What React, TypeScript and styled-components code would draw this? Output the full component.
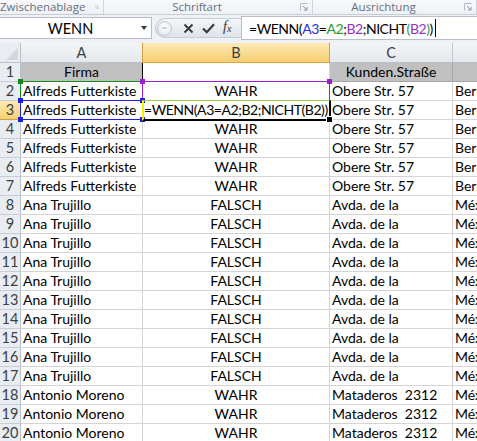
import React from "react";
import styled, { createGlobalStyle } from "styled-components";

const GlobalStyle = createGlobalStyle`
  html, body {
    margin: 0;
    padding: 0;
    background: #ffffff;
    overflow: hidden;
  }
`;

const Window = styled.div`
  width: 477px;
  height: 441px;
  overflow: hidden;
  display: flex;
  flex-direction: column;
  font-family: Lato, "Liberation Sans", sans-serif;
  color: #000;
`;

/* ---------- ribbon group labels ---------- */

const Ribbon = styled.div`
  height: 14px;
  flex-shrink: 0;
  display: flex;
  background: linear-gradient(#f8f9fb, #eef1f5);
  border-bottom: 1px solid #c5ccd6;
  font-family: "Open Sans", "Noto Sans", sans-serif;
  font-size: 11.5px;
  line-height: 14px;
  color: #65707e;
`;

const RibbonGroup = styled.div<{ $width: number; $end?: boolean }>`
  width: ${(p) => p.$width}px;
  flex-shrink: 0;
  display: flex;
  align-items: center;
  justify-content: ${(p) => (p.$end ? "flex-end" : "center")};
  gap: 10px;
  padding-right: 4px;
  box-sizing: border-box;
  border-right: 1px solid #cdd4de;
  white-space: nowrap;
  overflow: hidden;
`;

const GroupLabel = styled.span<{ $grow?: boolean }>`
  flex: ${(p) => (p.$grow ? 1 : "none")};
  text-align: center;
`;

const Launcher = () => (
  <svg width="8" height="8" viewBox="0 0 8 8">
    <path d="M0.5 7.5V0.5H7.5" fill="none" stroke="#b6bcc5" />
    <path d="M3 3L7 7M7 4V7H4" fill="none" stroke="#8f96a0" />
  </svg>
);

/* ---------- formula bar ---------- */

const FormulaBar = styled.div`
  height: 28px;
  flex-shrink: 0;
  display: flex;
  align-items: flex-start;
  padding-top: 2px;
  box-sizing: border-box;
  background: #eef1f5;
`;

const NameBox = styled.div`
  width: 152px;
  height: 22px;
  box-sizing: border-box;
  background: #fff;
  border: 1px solid #b7bec8;
  border-left: none;
  display: flex;
  align-items: center;
  font-size: 14.5px;
`;

const NameText = styled.span`
  flex: 1;
  text-align: center;
`;

const DropArrow = styled.span`
  width: 0;
  height: 0;
  margin-right: 4px;
  border-left: 3.5px solid transparent;
  border-right: 3.5px solid transparent;
  border-top: 4px solid #333;
`;

const Pill = styled.div`
  width: 86px;
  height: 20px;
  margin-top: 1px;
  margin-left: 3px;
  box-sizing: border-box;
  border-radius: 10px 0 0 10px;
  background: linear-gradient(#f4f6f8, #dfe3e8);
  border: 1px solid #c6ccd4;
  border-right: none;
  display: flex;
  align-items: center;
  padding-left: 1px;
`;

const RoundKnob = styled.span`
  width: 15px;
  height: 15px;
  border-radius: 50%;
  box-sizing: border-box;
  border: 1px solid #c2c7ce;
  background: radial-gradient(circle at 50% 40%, #ffffff, #dde1e6);
  display: flex;
  align-items: center;
  justify-content: center;
  &::after {
    content: "";
    width: 5px;
    height: 2px;
    border-radius: 1px;
    background: #c9cdd3;
  }
`;

const PillIcons = styled.span`
  display: flex;
  align-items: center;
  gap: 8px;
  margin-left: 11px;
`;

const Fx = styled.span`
  font-family: "Liberation Serif", serif;
  font-style: italic;
  font-size: 14px;
  color: #333;
  line-height: 14px;
  sub {
    font-size: 10px;
    vertical-align: -1px;
  }
`;

const FormulaInput = styled.div`
  flex: 1;
  height: 24px;
  margin-top: -1px;
  box-sizing: border-box;
  background: #fff;
  border: 1px solid #b7bec8;
  border-right: none;
  padding-left: 7px;
  display: flex;
  align-items: center;
  font-size: 14px;
  letter-spacing: -0.45px;
  white-space: pre;
`;

const Ref = styled.span<{ $c: string }>`
  color: ${(p) => p.$c};
`;

const Caret = styled.span`
  width: 1px;
  height: 18px;
  margin-left: 2px;
  background: #000;
`;

/* ---------- sheet grid ---------- */

const Sheet = styled.div`
  display: grid;
  grid-template-columns: 21px 122px 187px 123px 60px;
  grid-template-rows: 20px repeat(20, 19px);
  font-size: 14px;
  line-height: 18px;
`;

const Corner = styled.div`
  position: relative;
  box-sizing: border-box;
  background: #e9ecf0;
  border-right: 1px solid #b9c0c9;
  border-bottom: 1px solid #b9c0c9;
  &::after {
    content: "";
    position: absolute;
    right: 2px;
    bottom: 2px;
    border-left: 12px solid transparent;
    border-bottom: 12px solid #d3d7dc;
  }
`;

const ColHead = styled.div<{ $active?: boolean }>`
  box-sizing: border-box;
  display: flex;
  align-items: center;
  justify-content: center;
  color: #3a3f46;
  font-size: 14.5px;
  background: ${(p) =>
    p.$active
      ? "linear-gradient(#fde9b6, #f6cf72)"
      : "linear-gradient(#f3f5f7, #e5e8ec)"};
  border-right: 1px solid ${(p) => (p.$active ? "#d0a24e" : "#c3c8cf")};
  border-bottom: 1px solid ${(p) => (p.$active ? "#e4a63a" : "#b9c0c9")};
  border-left: ${(p) => (p.$active ? "1px solid #d0a24e" : "none")};
  margin-left: ${(p) => (p.$active ? "-1px" : "0")};
`;

const RowHead = styled.div<{ $active?: boolean }>`
  box-sizing: border-box;
  display: flex;
  align-items: center;
  justify-content: center;
  color: #3a3f46;
  font-size: 14.5px;
  background: ${(p) =>
    p.$active ? "linear-gradient(#fde9b6, #f6cf72)" : "#e9ecf0"};
  border-right: 1px solid ${(p) => (p.$active ? "#e4a63a" : "#b9c0c9")};
  border-bottom: 1px solid ${(p) => (p.$active ? "#d0a24e" : "#c9ced5")};
`;

const Cell = styled.div<{
  $align?: "left" | "center";
  $shaded?: boolean;
  $darkRight?: boolean;
  $formula?: boolean;
}>`
  position: relative;
  box-sizing: border-box;
  padding: 0 ${(p) => (p.$formula ? "1px" : "2px")};
  text-align: ${(p) => p.$align || "left"};
  letter-spacing: ${(p) => (p.$formula ? "-0.45px" : "normal")};
  white-space: pre;
  background: ${(p) => (p.$shaded ? "#c0c0c0" : "#ffffff")};
  border-right: 1px solid
    ${(p) => (p.$darkRight ? "#000" : p.$shaded ? "#a6a6a6" : "#d4d4d4")};
  border-bottom: 1px solid ${(p) => (p.$shaded ? "#a6a6a6" : "#d4d4d4")};
`;

const Clip = styled.div`
  overflow: hidden;
  height: 100%;
`;

const Outline = styled.div<{ $color: string }>`
  position: absolute;
  top: -1px;
  left: -1px;
  right: -1px;
  bottom: -1px;
  border: 1px solid ${(p) => p.$color};
  pointer-events: none;
  z-index: 2;
`;

const Handle = styled.span<{ $color: string; $v: "top" | "bottom"; $h: "left" | "right" }>`
  position: absolute;
  width: 5px;
  height: 5px;
  background: ${(p) => p.$color};
  ${(p) => p.$v}: -3px;
  ${(p) => p.$h}: -3px;
`;

const EditFrame = styled.div`
  position: absolute;
  top: -1px;
  left: -1px;
  right: -2px;
  bottom: -2px;
  border: 2px solid #000;
  border-top: 1px solid #8fd14f;
  border-left: 2px solid #f2f200;
  pointer-events: none;
  z-index: 3;
`;

const FillHandle = styled.span`
  position: absolute;
  right: -4px;
  bottom: -4px;
  width: 5px;
  height: 5px;
  background: #000;
  border: 1px solid #fff;
`;

type Range = { color: string; corners: Array<["top" | "bottom", "left" | "right"]> };

const RangeBox = ({ color, corners }: Range) => (
  <Outline $color={color}>
    {corners.map(([v, h]) => (
      <Handle key={v + h} $color={color} $v={v} $h={h} />
    ))}
  </Outline>
);

const all: Range["corners"] = [
  ["top", "left"],
  ["top", "right"],
  ["bottom", "left"],
  ["bottom", "right"],
];

type Row = { a: string; b: string; c: string; d: string };

const alfreds: Row = { a: "Alfreds Futterkiste", b: "WAHR", c: "Obere Str. 57", d: "Berlin" };
const ana: Row = { a: "Ana Trujillo", b: "FALSCH", c: "Avda. de la", d: "México D.F." };
const antonio: Row = { a: "Antonio Moreno", b: "WAHR", c: "Mataderos  2312", d: "México D.F." };

const rows: Row[] = [
  ...Array(6).fill(alfreds),
  ...Array(10).fill(ana),
  ...Array(3).fill(antonio),
];

const XIcon = () => (
  <svg width="11" height="11" viewBox="0 0 11 11">
    <path d="M1.5 1.5L9.5 9.5M9.5 1.5L1.5 9.5" stroke="#3a3a3a" strokeWidth="1.9" />
  </svg>
);

const CheckIcon = () => (
  <svg width="13" height="11" viewBox="0 0 13 11">
    <path d="M1 5.5L4.8 9.2L12 1.2" fill="none" stroke="#3a3a3a" strokeWidth="2.2" />
  </svg>
);

const App = () => {
  return (
    <Window>
      <GlobalStyle />
      <Ribbon>
        <RibbonGroup $width={104} $end>
          <GroupLabel>Zwischenablage</GroupLabel>
          <Launcher />
        </RibbonGroup>
        <RibbonGroup $width={209}>
          <GroupLabel $grow>Schriftart</GroupLabel>
          <Launcher />
        </RibbonGroup>
        <RibbonGroup $width={164}>
          <GroupLabel $grow>Ausrichtung</GroupLabel>
          <Launcher />
        </RibbonGroup>
      </Ribbon>

      <FormulaBar>
        <NameBox>
          <NameText>WENN</NameText>
          <DropArrow />
        </NameBox>
        <Pill>
          <RoundKnob />
          <PillIcons>
            <XIcon />
            <CheckIcon />
            <Fx>
              f<sub>x</sub>
            </Fx>
          </PillIcons>
        </Pill>
        <FormulaInput>
          =WENN(<Ref $c="#2a2af0">A3</Ref>=<Ref $c="#1f9a2e">A2</Ref>;
          <Ref $c="#9a2fc9">B2</Ref>;NICHT<Ref $c="#1f9a6e">(</Ref>
          <Ref $c="#9a2fc9">B2</Ref>
          <Ref $c="#1f9a6e">)</Ref>)
          <Caret />
        </FormulaInput>
      </FormulaBar>

      <Sheet>
        <Corner />
        <ColHead>A</ColHead>
        <ColHead $active>B</ColHead>
        <ColHead>C</ColHead>
        <ColHead />

        <RowHead>1</RowHead>
        <Cell $shaded $align="center" $darkRight>
          Firma
        </Cell>
        <Cell />
        <Cell $shaded $align="center">
          Kunden.Straße
        </Cell>
        <Cell $shaded />

        {rows.map((r, i) => {
          const n = i + 2;
          return (
            <React.Fragment key={n}>
              <RowHead $active={n === 3}>{n}</RowHead>
              <Cell>
                {r.a}
                {n === 2 && <RangeBox color="#138a13" corners={[["top", "left"], ["top", "right"]]} />}
                {n === 3 && <RangeBox color="#1d1dea" corners={all} />}
              </Cell>
              <Cell $align={n === 3 ? "left" : "center"} $formula={n === 3}>
                {n === 3 ? "=WENN(A3=A2;B2;NICHT(B2))" : r.b}
                {n === 2 && <RangeBox color="#9b1fd1" corners={[["top", "left"], ["top", "right"]]} />}
                {n === 3 && (
                  <EditFrame>
                    <FillHandle />
                  </EditFrame>
                )}
              </Cell>
              <Cell>{r.c}</Cell>
              <Cell>
                <Clip>{r.d}</Clip>
              </Cell>
            </React.Fragment>
          );
        })}
      </Sheet>
    </Window>
  );
};

export default App;
